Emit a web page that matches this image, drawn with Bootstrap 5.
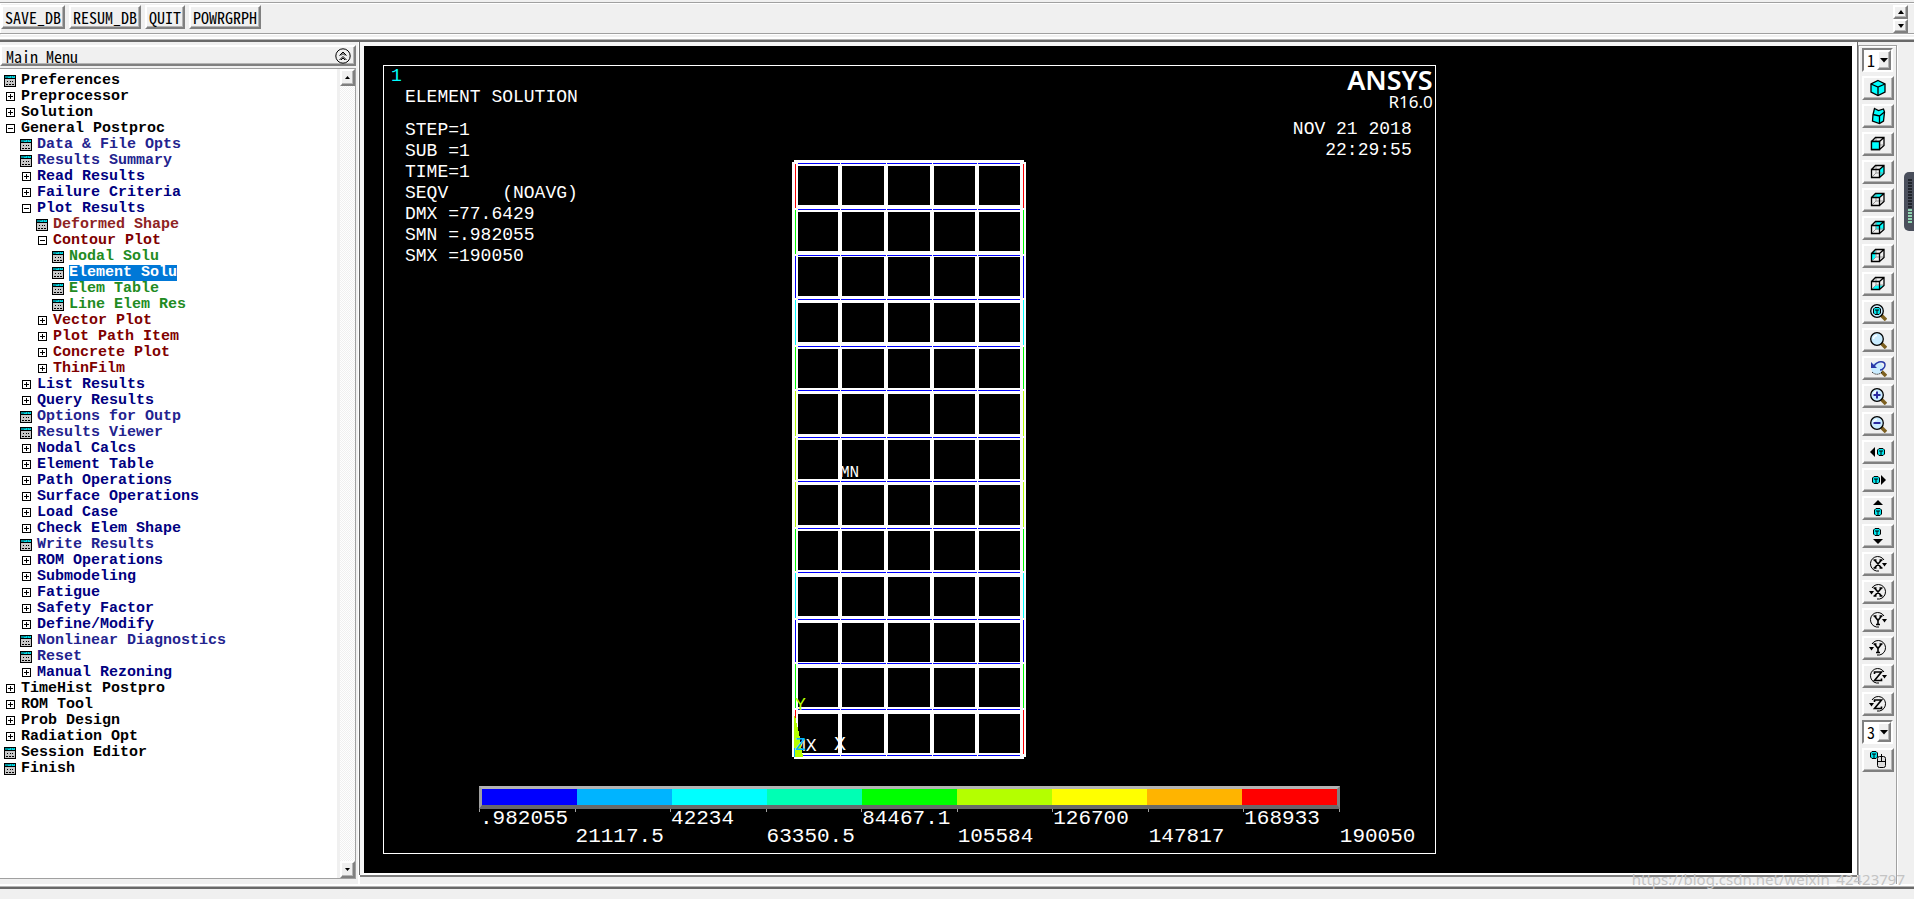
<!DOCTYPE html>
<html lang="en">
<head>
<meta charset="utf-8">
<meta name="viewport" content="width=device-width, initial-scale=1">
<title>ANSYS Main Menu</title>
<link href="https://cdn.jsdelivr.net/npm/bootstrap@5.3.0/dist/css/bootstrap.min.css" rel="stylesheet">
<style>
  :root { --face:#f0f0f0; --line:#a0a0a0; --dark:#696969; }
  body { background:var(--face); color:#000; font-family:"Liberation Mono",monospace; font-size:15px; line-height:16px; }
  .ui-font { font-family:"Noto Sans CJK SC",sans-serif; font-feature-settings:"hwid"; font-size:16px; line-height:20px; }
  button { font-feature-settings:inherit; }
  .etched { border:1px solid var(--line); box-shadow:1px 1px 0 #fff, inset 1px 1px 0 #fff; }
  .raised { background:var(--face); border:2px solid; border-color:#fff #808080 #808080 #fff; box-shadow:inset -1px -1px 0 #b4b4b4; border-radius:0; color:#000; padding:0; }
  .cmdbar { margin-top:2px; border-width:1px 0; height:32px; padding:2px 6px 0 1px; }
  .cmd { height:24px; padding:0 2px; }
  .spin { width:15px; height:14px; line-height:0; }
  .gap-line { height:6px; }
  .rule { height:2px; background:var(--dark); box-shadow:0 -1px 0 #b4b4b4, 0 -3px 0 #fff; }

  .menu-pane { flex:0 0 358px; padding:3px 2px 8px 0; }
  .menu-title { height:21px; padding:0 3px 0 4px; }
  .menu-body { margin-top:2px; background:#fff; border:solid var(--line); border-width:1px 1px 1px 0; }
  .tree { padding:4px 0 0 4px; font-weight:bold; }
  .tree li { height:16px; gap:5px; white-space:pre; }
  .tree svg { width:12px; height:12px; flex:none; }
  .tree a { color:inherit; text-decoration:none; }
  .lv0 { color:#000; } .lv1 { color:#000080; padding-left:16px; } .lv2 { color:#800000; padding-left:32px; } .lv3 { color:#228b22; padding-left:48px; }
  .lv1.leaf { color:#23238e; } .lv2.leaf { color:#8e2323; }
  .tree .picked { background:#0078d7; color:#fff; }
  .track { width:18px; border-left:3px solid var(--face); background:repeating-conic-gradient(#f0f0f0 0 25%,#fff 0 50%) 0 0/2px 2px; }
  .track .raised { width:15px; height:17px; line-height:0; }

  .view-pane { border-left:2px solid #fff; padding-bottom:12px; min-width:0; }
  .view-edge { border:solid; border-width:4px 5px 2px 4px; border-color:#f6f6f6 #fff #fff #f6f6f6; box-shadow:0 2px 0 #808080, -1px 0 0 #696969, 1px 0 0 #696969; background:#000; padding:19px; }
  .plot { width:72.6%; border:1px solid #fff; color:#fff; font-size:18px; line-height:21px; }
  .plot-grid { display:grid; grid-template-columns:1fr auto 1fr; }
  .win-no { color:#00ffff; padding-left:7px; line-height:21px; }
  .info { padding-left:21px; white-space:pre; }
  .logo { font-family:"Noto Sans","Open Sans",sans-serif; font-weight:600; font-size:27px; line-height:27px; padding-right:2px; }
  .release { font-family:"Noto Sans","Open Sans",sans-serif; font-size:17px; line-height:18px; padding-right:2px; }
  .stamp { padding:8px 23px 0 0; }
  .model { margin-top:94px; width:234px; height:599px; }
  .legend-box { margin:27px 95px 0 95px; }
  .ramp { height:23px; border:solid; border-width:3px 3px 4px; border-color:#b4b4b4 #808080 #696969 #a0a0a0; }
  .marks { font-size:21px; line-height:18px; height:42px; }
  .marks > div { flex:0 0 11.1%; width:0; white-space:nowrap; background:linear-gradient(#a0a0a0,#a0a0a0) 0 0/1px 3px no-repeat; padding:1px 0 0 1px; }
  .marks > div:nth-child(even) { padding-top:19px; }

  .tool-pane { flex:0 0 57px; padding:3px 17px 0 1px; }
  .tool-stack { padding:2px 2px 0 3px; border-bottom:0; gap:4px; }
  .tool-stack .raised { width:32px; height:24px; line-height:0; }
  .combo { width:31px; height:24px; border:2px solid; border-color:#808080 #fff #fff #808080; background:#fff; position:relative; }
  .combo select { appearance:none; border:0; background:#fff; width:100%; height:20px; padding:0 0 0 3px; color:#000; display:block; }
  .tool-stack .drop { position:absolute; right:0; top:0; width:14px; height:20px; pointer-events:none; }
  .gauge { position:absolute; right:0; top:172px; width:10px; height:59px; border-radius:5px 0 0 5px; background:#4a4f5c; padding:7px 2px 7px 4px; }
  .gauge div { height:45px; background:linear-gradient(#20242c 0 66%,#8fd3b0 66%); -webkit-mask:repeating-linear-gradient(#000 0 2px,transparent 2px 3px); mask:repeating-linear-gradient(#000 0 2px,transparent 2px 3px); }
  .credit { position:absolute; right:9px; bottom:11px; font:15px/18px "Noto Sans",sans-serif; color:#c4c4c4; }
</style>
</head>
<body>
<svg width="0" height="0" class="position-absolute" aria-hidden="true">
  <defs>
    <symbol id="form" viewBox="0 0 12 12"><g shape-rendering="crispEdges"><path d="M0 0h12v12H0z"/><path fill="#008c96" d="M1 1h10v2H1z"/><path fill="#00dce6" d="M6 1h1v1H6zM8 1h1v1H8zM10 1h1v1h-1zM4 2h3v1H4zM8 2h3v1H8z"/><path fill="#c8c8c8" d="M1 4h10v7H1z"/><path d="M3 6h1v1H3zM6 6h1v1H6zM8 6h1v1H8zM2 9h2v1H2zM5 9h2v1H5zM8 9h2v1H8z"/></g></symbol>
    <symbol id="plus" viewBox="0 0 12 12"><g shape-rendering="crispEdges"><path d="M2 1h9v9H2z"/><path fill="#fff" d="M3 2h7v7H3z"/><path d="M4 5h5v1H4zM6 3h1v5H6z"/></g></symbol>
    <symbol id="minus" viewBox="0 0 12 12"><g shape-rendering="crispEdges"><path d="M2 1h9v9H2z"/><path fill="#fff" d="M3 2h7v7H3z"/><path d="M4 5h5v1H4z"/></g></symbol>
    <symbol id="frame" viewBox="0 0 18 18"><path d="M3 14l4-4h7M7 10V3" fill="none" stroke="#999"/><path d="M2.500 6.500h8v8h-8zM2.500 6.500l4-4h8.500v8l-4.500 4M10.500 6.500l4.500-4" fill="none" stroke="#000" stroke-width="1.300"/></symbol>
    <symbol id="mini" viewBox="0 0 8 8"><path d="M2 .5h4L7.500 2v4L6 7.500H2L.5 6V2z" fill="#00e5ee" stroke="#000"/><path d="M2 3h4M4 3v4" stroke="#000"/></symbol>
    <symbol id="lens" viewBox="0 0 18 18"><path d="M12 12l5 5" stroke="#7d6020" stroke-width="3.500"/><circle cx="8" cy="8" r="6.300" fill="#c9ecff" stroke="#000" stroke-width="1.300"/><path d="M4.500 8A3.500 3.500 0 0 1 8 4.500" stroke="#fff" stroke-width="1.500" fill="none"/></symbol>
    <symbol id="spin-cw" viewBox="0 0 18 18"><path d="M10 16A7.300 7.300 0 1 1 15 5" fill="none" stroke="#000"/><path d="M13 8h5L15.500 11.500z"/></symbol>
  </defs>
</svg>

<div class="d-flex flex-column vh-100 overflow-hidden position-relative">
  <header>
    <div class="cmdbar etched d-flex align-items-start gap-1 ui-font">
      <button class="raised cmd">SAVE_DB</button><button class="raised cmd">RESUM_DB</button><button class="raised cmd">QUIT</button><button class="raised cmd">POWRGRPH</button>
      <div class="ms-auto d-flex flex-column">
        <button class="raised spin" aria-label="Scroll up"><svg width="8" height="6"><path d="M1 5l3-4 3 4z"/></svg></button>
        <button class="raised spin" aria-label="Scroll down"><svg width="8" height="6"><path d="M1 1l3 4 3-4z"/></svg></button>
      </div>
    </div>
    <div class="gap-line"></div>
    <div class="rule"></div>
  </header>

  <main class="d-flex flex-fill" style="min-height:0">
    <nav class="menu-pane d-flex flex-column">
      <div class="menu-title raised d-flex align-items-center justify-content-between ui-font">
        <span>Main Menu</span>
        <svg width="16" height="16" fill="none" stroke="#000"><circle cx="8" cy="8" r="7.200"/><path d="M4.500 7.500L8 4l3.500 3.500M4.500 12L8 8.500 11.500 12M6 7.500L8 5.500l2 2M6 12l2-2 2 2"/></svg>
      </div>
      <div class="menu-body d-flex flex-fill">
        <ul class="tree list-unstyled flex-fill mb-0" id="tree"></ul>
        <div class="track d-flex flex-column justify-content-between">
          <button class="raised" aria-label="Up"><svg width="7" height="5"><path d="M1 4l2.500-3L6 4z"/></svg></button>
          <button class="raised" aria-label="Down"><svg width="7" height="5"><path d="M1 1l2.500 3L6 1z"/></svg></button>
        </div>
      </div>
    </nav>

    <section class="view-pane d-flex flex-column flex-fill">
      <div class="view-edge flex-fill d-flex">
        <div class="plot">
          <div class="plot-grid">
            <div>
              <div class="win-no">1</div>
              <div class="info">ELEMENT SOLUTION</div>
              <div class="info mt-2 pt-1">STEP=1
SUB =1
TIME=1
SEQV     (NOAVG)
DMX =77.6429
SMN =.982055
SMX =190050</div>
            </div>
            <svg class="model" id="model" viewBox="793 161 234 599"></svg>
            <div class="text-end">
              <div class="logo">ANSYS</div>
              <div class="release">R16.0</div>
              <div class="stamp">NOV 21 2018<br>22:29:55</div>
            </div>
          </div>
          <div class="legend-box">
            <div class="ramp d-flex" id="ramp"></div>
            <div class="marks d-flex" id="marks"></div>
          </div>
        </div>
      </div>
    </section>

    <aside class="tool-pane">
      <div class="tool-stack etched d-flex flex-column h-100" id="tools"></div>
    </aside>
  </main>
  <div class="rule"></div>
  <div class="gap-line mb-1"></div>
  <div class="gauge"><div></div></div>
  <div class="credit">https://blog.csdn.net/weixin_42423797</div>
</div>

<script>
// Menu rows: level, kind (f = form, p = collapsed, m = expanded), label
const rows = `0f Preferences|0p Preprocessor|0p Solution|0m General Postproc|1f Data & File Opts|1f Results Summary|1p Read Results|1p Failure Criteria|1m Plot Results|2f Deformed Shape|2m Contour Plot|3f Nodal Solu|3f Element Solu|3f Elem Table|3f Line Elem Res|2p Vector Plot|2p Plot Path Item|2p Concrete Plot|2p ThinFilm|1p List Results|1p Query Results|1f Options for Outp|1f Results Viewer|1p Nodal Calcs|1p Element Table|1p Path Operations|1p Surface Operations|1p Load Case|1p Check Elem Shape|1f Write Results|1p ROM Operations|1p Submodeling|1p Fatigue|1p Safety Factor|1p Define/Modify|1f Nonlinear Diagnostics|1f Reset|1p Manual Rezoning|0p TimeHist Postpro|0p ROM Tool|0p Prob Design|0p Radiation Opt|0f Session Editor|0f Finish`.split('|');
const kinds = {f:'form', p:'plus', m:'minus'};
document.getElementById('tree').innerHTML = rows.map(r => {
  const name = r.slice(3);
  return `<li class="d-flex align-items-center lv${r[0]}${r[1] === 'f' ? ' leaf' : ''}"><svg><use href="#${kinds[r[1]]}"/></svg><a href="#"${name === 'Element Solu' ? ' class="picked"' : ''}>${name.replace('&', '&amp;')}</a></li>`;
}).join('');

// Frame model: storey bands [top, bottom, centre line] and bay columns [left, right]
const bands = [[161,167,164],[206,213,210],[252,258,256],[297,304,300],[343,350,347],[389,395,391],[435,441,438],[480,486,482],[526,532,529],[571,578,573],[617,624,620],[663,669,664],[708,715,710],[754,760,756]];
const cols = [[793,799],[839,843],[885,889],[931,935],[976,980],[1021,1027]];
const storey = ['#f00','#0f0','#00f','#0ff','#0f0','#b4ff00','#b4ff00','#b4ff00','#0f0','#0ff','#00f','#0f0','#f00'];
const box = (x, y, w, h, c) => `<rect x="${x}" y="${y}" width="${w}" height="${h}" fill="${c}"/>`;
let art = '<g shape-rendering="crispEdges"><text x="841" y="478" font-size="16" fill="#fff">MN</text><text x="796" y="752" font-size="18" fill="#fff">MX</text>';
cols.forEach(c => art += box(c[0], 163, c[1] - c[0], 595, '#fff'));
bands.forEach(b => art += box(795, b[0], 230, b[1] - b[0], '#fff'));
bands.forEach(b => cols.slice(1).forEach((c, i) => art += box(i ? cols[i][0] + 3 : 799, b[2], (i < 4 ? c[0] + 2 : c[0]) - (i ? cols[i][0] + 3 : 799), 1, '#00f')));
storey.forEach((c, i) => [796, 1024].forEach(x => art += box(x, bands[i][2] + 1, 1, bands[i + 1][2] - bands[i][2] - 2, c)));
art += '<path d="M795 717h1l2 9 2 8 2 12 2 12h-9z" fill="#b4ff00"/>' + box(795, 749, 1, 9, '#00b4ff') + '</g>';
art += '<text x="796" y="711" font-size="18" fill="#b4ff00">Y</text><text x="796" y="751" font-size="18" fill="#00b4ff">Z</text><text x="835" y="751" font-size="20" fill="#fff">X</text>';
document.getElementById('model').innerHTML = art;

// Contour legend
document.getElementById('ramp').innerHTML = ['#00f','#00b4ff','#0ff','#00ffb4','#0f0','#b4ff00','#ff0','#ffb400','#f00'].map(c => `<div class="flex-fill" style="background:${c}"></div>`).join('');
document.getElementById('marks').innerHTML = ['.982055','21117.5','42234','63350.5','84467.1','105584','126700','147817','168933','190050'].map(t => `<div>${t}</div>`).join('');

// View tools
const face = d => `<path d="${d}" fill="#0ff"/><use href="#frame"/>`;
const mini = (x, y) => `<use href="#mini" x="${x}" y="${y}" width="8" height="8"/>`;
const lens = s => '<use href="#lens"/>' + s;
const turn = (d, flip) => `<g${flip ? ' transform="matrix(-1 0 0 1 18 0)"' : ''}><use href="#spin-cw"/></g><path d="${d}" fill="none" stroke="#000" stroke-width="1.600"/>`;
const X = 'M5.500 5l7 8M12.500 5l-7 8M4.500 5h3M10.500 5h3M4.500 13h3M10.500 13h3', Y = 'M5.500 5L9 9.500 12.500 5M9 9.500V14M4.500 5h3M10.500 5h3M7 13.500h4', Z = 'M5.500 7V5h7l-7 8.500h7v-2';
const tools = [
  ['Isometric', '<path d="M9 1.500l7 3.500v8l-7 3.500L2 13V5z" fill="#0ff" stroke="#000" stroke-width="1.300"/><path d="M2 5l7 3 7-3M9 8v8" fill="none" stroke="#000" stroke-width="1.300"/>'],
  ['Oblique', '<path d="M5.500 1.500l4 2L14.500 2l1 3-1 9-4 2.500L3.500 14l.5-6.500z" fill="#0ff" stroke="#000" stroke-width="1.300"/><path d="M4 7.500l6.500 1.500 5-4M10.500 9v7" fill="none" stroke="#000" stroke-width="1.300"/>'],
  ['Front', face('') + '<path d="M2.500 6.500h8v8h-8z" fill="#0ff" stroke="#000" stroke-width="1.300"/>'],
  ['Right', face('M10.500 6.500l4.500-4v8l-4.500 4z')],
  ['Top', face('M2.500 6.500l4-4H15l-4.500 4z')],
  ['Back', face('M6.500 2.500H15v8H6.500z')],
  ['Left', face('M2.500 6.500l4-4v8l-4 4z')],
  ['Bottom', face('M2.500 14.500l4-4H15l-4.500 4z')],
  ['Fit', lens(mini(4, 4))], ['Box zoom', lens('')],
  ['Back up', '<path d="M12 12l5 5" stroke="#7d6020" stroke-width="3.500"/><circle cx="8" cy="9" r="6" fill="#c9ecff"/><path d="M3 13c3 3 7 3 10 0" fill="none" stroke="#000" stroke-dasharray="1 1"/><path d="M5 7c4-6 11-5 11-1 0 3-3 5-5 5" fill="none" stroke="#2a3aa8" stroke-width="1.500"/><path d="M2 3v6h6z" fill="#2a3aa8"/>'],
  ['Zoom in', lens('<path d="M8 4.500v7M4.500 8h7" stroke="#2a2aa0" stroke-width="2"/>')],
  ['Zoom out', lens('<path d="M4.500 8h7" stroke="#2a2aa0" stroke-width="2"/>')],
  ['Pan left', '<path d="M6 4v10L1 9z"/>' + mini(8, 5)], ['Pan right', '<path d="M12 4v10l5-5z"/>' + mini(3, 5)],
  ['Pan up', '<path d="M4 6h10L9 1z"/>' + mini(5, 9)], ['Pan down', '<path d="M4 12h10l-5 5z"/>' + mini(4, 1)],
  ['Rotate +X', turn(X)], ['Rotate -X', turn(X, 1)], ['Rotate +Y', turn(Y)], ['Rotate -Y', turn(Y, 1)], ['Rotate +Z', turn(Z)], ['Rotate -Z', turn(Z, 1)]
];
const btn = ([n, s]) => `<button class="raised" aria-label="${n}"><svg width="18" height="18">${s}</svg></button>`;
const combo = (n, v) => `<div class="combo"><select class="ui-font" aria-label="${n}"><option>${v}</option></select><span class="drop raised d-flex align-items-center justify-content-center"><svg width="8" height="5"><path d="M0 0h8L4 4.500z"/></svg></span></div>`;
document.getElementById('tools').innerHTML = combo('Window', 1) + tools.map(btn).join('') + combo('Rate', 3) +
  btn(['Dynamic mode', mini(1, 0) + '<rect x="8.500" y="5.500" width="8" height="11" rx="2" fill="#ddd" stroke="#000"/><path d="M8.500 10.500h8M12.500 5.500v5M12.500 5V3" stroke="#000"/>']);
</script>
<script src="https://cdn.jsdelivr.net/npm/bootstrap@5.3.0/dist/js/bootstrap.bundle.min.js"></script>
</body>
</html>
